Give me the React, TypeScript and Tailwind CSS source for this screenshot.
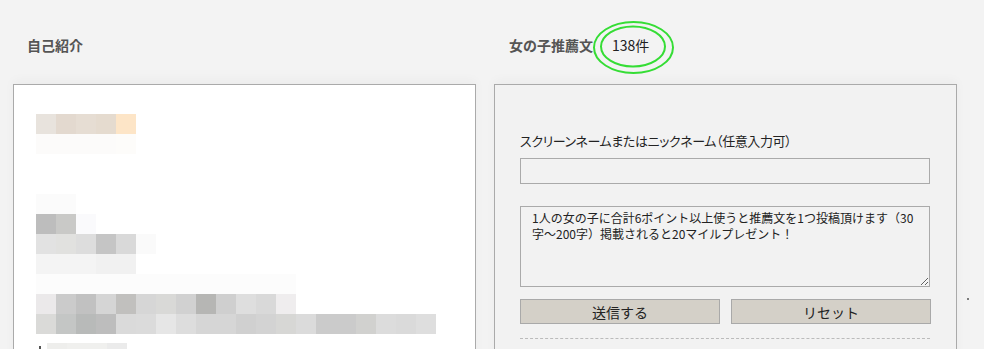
import React from 'react'

// mosaic rows of the blurred self-introduction (20px cells, null = blank)
const mosaic: (string | null)[][] = [
  ['#e8e3dd', '#e3d9cf', '#e6ddd3', '#e5dbcf', '#fde5c7'],
  ['#fcfbfa', '#fcfbfa', '#fcfbfa', '#fcfbfa', '#fdfcfa'],
  [],
  [],
  ['#fbfbfb', '#fbfbfb'],
  ['#bdbdbd', '#c9c9c7', '#fafafc'],
  ['#e2e2e2', '#e1e1df', '#dddddd', '#c5c5c5', '#d9d9d9', '#fafafa'],
  ['#f4f4f4', '#f4f4f4', '#f4f4f4', '#f1f1f1', '#f1f1f1'],
  ['#fcfcfc', '#fcfcfc', '#fcfcfc', '#fcfcfc', '#fcfcfc', '#fcfcfc', '#fcfcfc', '#fcfcfc', '#fcfcfc', '#fcfcfc', '#fcfcfc', '#fcfcfc', '#fcfcfc'],
  ['#ebe9ea', '#cbcbcb', '#c1c1c1', '#d5d5d5', '#c1c0be', '#d6d6d6', '#d9d9d7', '#d1d1d1', '#b6b6b4', '#cfcfcf', '#dedede', '#d9d9d9', '#efedee'],
  ['#dadad8', '#c4c6c5', '#b8bab9', '#bdbdbd', '#dadada', '#dbdbdb', '#e6e6e6', '#dddddd', '#d6d6d6', '#d6d6d6', '#d0d0d0', '#d3d3d3', '#d7d7d5', '#dbdbdb', '#cbcbcb', '#cbcbcb', '#d1d1cf', '#dcdcdc', '#dadada', '#dedede'],
]

const font = "font-['Noto_Sans_CJK_JP',sans-serif]"

function Mosaic() {
  return (
    <div className="flex flex-col">
      {mosaic.map((row, i) => (
        <div key={i} className="flex h-[20px]">
          {row.map((c, j) => (
            <div key={j} className="w-[20px] h-[20px]" style={{ backgroundColor: c ?? 'transparent' }} />
          ))}
        </div>
      ))}
      <div className="flex items-start mt-[9px]">
        <div className="w-[2px] h-[4px] mt-[3px] bg-[#555] mr-[6px] ml-[3px]" />
        <div className="w-[20px] h-[8px] bg-[#eeeeec]" />
        <div className="w-[40px] h-[8px] bg-[#f0f0ee]" />
        <div className="w-[20px] h-[8px] bg-[#ebebeb]" />
      </div>
    </div>
  )
}

export default function App() {
  return (
    <div className={`relative w-[984px] h-[349px] overflow-hidden bg-[#f3f3f3] ${font}`}>
      <div className="flex gap-[18px] pl-[13px]">
        {/* 自己紹介 */}
        <div className="w-[463px] shrink-0">
          <div className="h-[84px] pt-[35px] pl-[14px]">
            <h2 className="text-[14px] leading-[20px] font-bold text-[#555]">自己紹介</h2>
          </div>
          <div className="h-[300px] bg-white border border-[#aaaaaa] pt-[29px] pl-[22px] shadow-[0_-4px_10px_rgba(0,0,0,0.03)]">
            <Mosaic />
          </div>
        </div>

        {/* 女の子推薦文 */}
        <div className="w-[463px] shrink-0">
          <div className="relative h-[84px] pt-[35px] pl-[15px] flex items-start">
            <h2 className="text-[14px] leading-[20px] font-bold text-[#555]">女の子推薦文</h2>
            <span className="ml-[19px] text-[14px] leading-[20px] text-[#222]">138件</span>
            <svg className="absolute left-[96px] top-[18px]" width="88" height="60" viewBox="0 0 88 60">
              <ellipse cx="43.5" cy="29.5" rx="39.5" ry="25.5" fill="none" stroke="#35dd35" strokeWidth="2" />
              <ellipse cx="43" cy="28.5" rx="32" ry="20" fill="none" stroke="#35dd35" strokeWidth="2" />
            </svg>
          </div>
          <div className="h-[300px] bg-[#f2f2f2] border border-[#aaaaaa] pt-[46px] pl-[25px] shadow-[0_-4px_10px_rgba(0,0,0,0.03)]">
            <label className="block text-[13px] leading-[20px] tracking-[-0.4px] text-[#222] [font-feature-settings:'palt']">
              スクリーンネームまたはニックネーム（任意入力可）
            </label>
            <input
              type="text"
              className="block mt-[7px] w-[410px] h-[26px] bg-[#f2f2f2] border border-[#aaaaaa] outline-none px-[4px] text-[13px]"
            />
            <textarea
              className="block mt-[22px] w-[410px] h-[81px] bg-[#f2f2f2] border border-[#aaaaaa] outline-none pt-[3px] pl-[11px] pr-[4px] text-[12px] leading-[16px] text-[#222] placeholder:text-[#222] resize"
              placeholder={'1人の女の子に合計6ポイント以上使うと推薦文を1つ投稿頂けます（30\n字～200字）掲載されると20マイルプレゼント！'}
            />
            <div className="flex gap-[11px] mt-[12px]">
              <button className="w-[200px] h-[25px] bg-[#d4d0c8] border border-[#a9a9a9] text-[14px] leading-[20px] text-[#222]">
                送信する
              </button>
              <button className="w-[200px] h-[25px] bg-[#d4d0c8] border border-[#a9a9a9] text-[14px] leading-[20px] text-[#222]">
                リセット
              </button>
            </div>
            <div className="mt-[14px] w-[410px] border-t border-dashed border-[#bbbbbb]" />
          </div>
        </div>
      </div>
      <div className="absolute left-[967px] top-[298px] w-[2px] h-[2px] bg-[#555] rounded-full" />
    </div>
  )
}
